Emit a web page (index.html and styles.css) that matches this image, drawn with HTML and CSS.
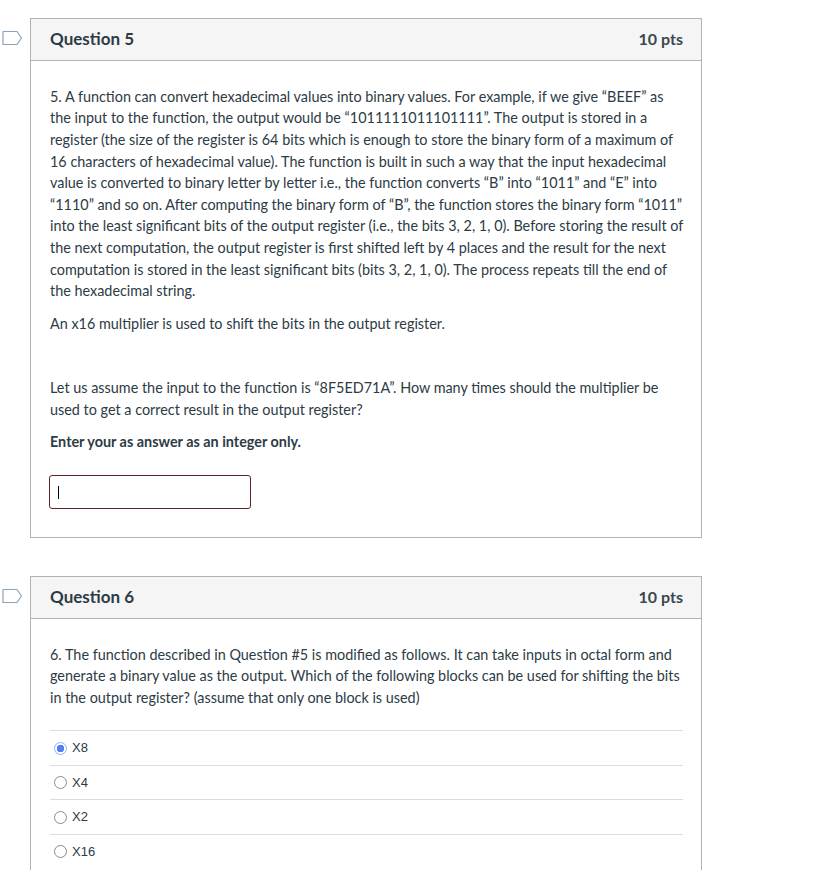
FILE: index.html
```html
<!DOCTYPE html>
<html lang="en">
<head>
    <meta charset="UTF-8">
    <title>Quiz</title>
    <link rel="stylesheet" href="styles.css">
</head>
<body>

<div class="question-row">
    <div class="flag">
        <svg width="21" height="16" viewBox="0 0 21 16"><path d="M1 1.5 H15 L19.5 8 L15 14.5 H1 Z" fill="none" stroke="#8ea3b8" stroke-width="1.2" stroke-linejoin="round"/></svg>
    </div>
    <div class="question">
        <div class="q-header">
            <span class="q-title">Question 5</span>
            <span class="q-pts">10 pts</span>
        </div>
        <div class="q-body">
            <p>5. A function can convert hexadecimal values into binary values. For example, if we give “BEEF” as the input to the function, the output would be “1011111011101111”. The output is stored in a register (the size of the register is 64 bits which is enough to store the binary form of a maximum of 16 characters of hexadecimal value). The function is built in such a way that the input hexadecimal value is converted to binary letter by letter i.e., the function converts “B” into “1011” and “E” into “1110” and so on. After computing the binary form of “B”, the function stores the binary form “1011” into the least significant bits of the output register (i.e., the bits 3, 2, 1, 0). Before storing the result of the next computation, the output register is first shifted left by 4 places and the result for the next computation is stored in the least significant bits (bits 3, 2, 1, 0). The process repeats till the end of the hexadecimal string.</p>
            <p>An x16 multiplier is used to shift the bits in the output register.</p>
            <p>&nbsp;</p>
            <p>Let us assume the input to the function is “8F5ED71A”. How many times should the multiplier be used to get a correct result in the output register?</p>
            <p><strong>Enter your as answer as an integer only.</strong></p>
            <div class="answer-box">
                <input type="text" class="answer-input" value="">
                <span class="caret"></span>
            </div>
        </div>
    </div>
</div>

<div class="question-row">
    <div class="flag">
        <svg width="21" height="16" viewBox="0 0 21 16"><path d="M1 1.5 H15 L19.5 8 L15 14.5 H1 Z" fill="none" stroke="#8ea3b8" stroke-width="1.2" stroke-linejoin="round"/></svg>
    </div>
    <div class="question">
        <div class="q-header">
            <span class="q-title">Question 6</span>
            <span class="q-pts">10 pts</span>
        </div>
        <div class="q-body">
            <p>6. The function described in Question #5 is modified as follows. It can take inputs in octal form and generate a binary value as the output. Which of the following blocks can be used for shifting the bits in the output register? (assume that only one block is used)</p>
            <div class="answers">
                <label class="answer"><input type="radio" name="q6" checked> X8</label>
                <label class="answer"><input type="radio" name="q6"> X4</label>
                <label class="answer"><input type="radio" name="q6"> X2</label>
                <label class="answer"><input type="radio" name="q6"> X16</label>
            </div>
        </div>
    </div>
</div>

</body>
</html>
```

FILE: styles.css
```css
body {
    font-family: Lato, "Open Sans", sans-serif;
    color: #2d3b45;
    background-color: white;
    margin: 0;
    padding: 18px 0 0 0;
}
.question-row {
    display: flex;
    margin-bottom: 38px;
}
.flag {
    width: 30px;
    padding-top: 12px;
    padding-left: 2px;
    box-sizing: border-box;
}
.question {
    width: 672px;
    border: 1px solid #b3b3b3;
    box-sizing: border-box;
}
.q-header {
    display: flex;
    justify-content: space-between;
    align-items: center;
    height: 42px;
    padding: 0 18px 2px 19px;
    box-sizing: border-box;
    background-color: #f5f5f5;
    border-bottom: 1px solid #b3b3b3;
}
.q-title {
    font-size: 17px;
    font-weight: bold;
    color: #2d3b45;
}
.q-pts {
    font-size: 16px;
    font-weight: bold;
    color: #3b4750;
}
.q-body {
    padding: 14px 15px 28px 19px;
    font-size: 14.4px;
    line-height: 21.6px;
}
.q-body p {
    margin: 10.8px 0;
}
.answer-box {
    position: relative;
    margin-top: 22px;
    margin-left: -1px;
}
.answer-input {
    width: 202px;
    height: 34px;
    box-sizing: border-box;
    border: 1px solid #5e2424;
    border-radius: 3px;
    padding: 0 10px;
    outline: none;
    display: block;
}
.caret {
    position: absolute;
    left: 9px;
    top: 11px;
    width: 1px;
    height: 13px;
    background-color: black;
}
.answers {
    margin-top: 22px;
    margin-right: 3px;
}
.answer {
    display: flex;
    align-items: center;
    height: 34.5px;
    border-top: 1px solid #dcdcdc;
    box-sizing: border-box;
    font-family: "Liberation Sans", Arial, sans-serif;
    font-size: 13px;
    color: #2d3b45;
    padding-left: 4px;
}
.answer input {
    appearance: none;
    width: 13px;
    height: 13px;
    margin: 0 5px 0 0;
    border: 1px solid #8a8a8a;
    border-radius: 50%;
    box-sizing: border-box;
}
.answer input:checked {
    border: 1px solid #8fb0f5;
    background: radial-gradient(circle, #4f7ff0 0 3.5px, white 4px);
}
```
